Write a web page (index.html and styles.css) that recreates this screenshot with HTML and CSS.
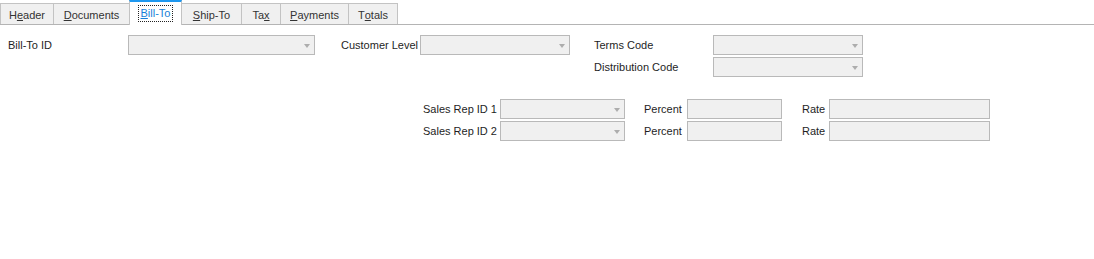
FILE: index.html
```html
<!DOCTYPE html>
<html lang="en">
<head>
    <meta charset="UTF-8">
    <title>Bill-To</title>
    <link rel="stylesheet" href="styles.css">
</head>
<body>
    <div class="tabs">
        <div class="tab w-header">H<u>e</u>ader</div>
        <div class="tab w-documents"><u>D</u>ocuments</div>
        <div class="tab active w-billto"><span class="focus"><u>B</u>ill-To</span></div>
        <div class="tab w-shipto"><u>S</u>hip-To</div>
        <div class="tab w-tax">Ta<u>x</u></div>
        <div class="tab w-payments"><u>P</u>ayments</div>
        <div class="tab w-totals">T<u>o</u>tals</div>
    </div>

    <div class="form">
        <div class="top">
            <div class="group g-billto">
                <label>Bill-To ID</label>
                <div class="select"></div>
            </div>
            <div class="group g-level">
                <label>Customer Level</label>
                <div class="select"></div>
            </div>
            <div class="group g-terms">
                <label>Terms Code</label>
                <div class="select"></div>
                <label>Distribution Code</label>
                <div class="select"></div>
            </div>
        </div>

        <div class="reps">
            <label>Sales Rep ID 1</label>
            <div class="select"></div>
            <label class="pct">Percent</label>
            <div class="input"></div>
            <label class="rate">Rate</label>
            <div class="input"></div>

            <label>Sales Rep ID 2</label>
            <div class="select"></div>
            <label class="pct">Percent</label>
            <div class="input"></div>
            <label class="rate">Rate</label>
            <div class="input"></div>
        </div>
    </div>
</body>
</html>
```

FILE: styles.css
```css
body {
    margin: 0;
    font-family: "Liberation Sans", Arial, sans-serif;
    font-size: 11px;
    color: #1e1e1e;
    background: #fff;
}
.tabs {
    display: flex;
    align-items: flex-end;
    height: 24px;
    border-bottom: 1px solid #b4b4b4;
}
.tab {
    box-sizing: border-box;
    height: 21px;
    margin-right: -1px;
    border: 1px solid #c3c3c3;
    border-bottom: none;
    background: #f0f0f0;
    color: #333;
    display: flex;
    align-items: center;
    justify-content: center;
    padding-top: 1px;
}
.tab.active {
    height: 25px;
    margin-bottom: -1px;
    border-top: 2px solid #1e98f0;
    background: #fff;
    color: #1a7fd8;
    padding-top: 0;
}
.tab .focus {
    outline: 1px dotted #222;
    outline-offset: 1px;
    padding: 0 1px;
    line-height: 13px;
}
.w-header { width: 54px; }
.w-documents { width: 77px; }
.w-billto { width: 53px; }
.w-shipto { width: 61px; }
.w-tax { width: 40px; }
.w-payments { width: 69px; }
.w-totals { width: 50px; }

.form {
    padding-top: 10px;
}
.top {
    display: flex;
    align-items: flex-start;
}
.group {
    display: grid;
    row-gap: 2px;
    align-items: center;
}
.g-billto {
    margin-left: 8px;
    grid-template-columns: 120px 187px;
}
.g-level {
    margin-left: 26px;
    grid-template-columns: 79px 150px;
}
.g-terms {
    margin-left: 24px;
    grid-template-columns: 119px 150px;
}
label {
    white-space: nowrap;
}
.select,
.input {
    box-sizing: border-box;
    height: 20px;
    border: 1px solid #b9b9b9;
    background: #f0f0f0;
}
.select {
    display: flex;
    align-items: center;
    justify-content: flex-end;
    padding-right: 4px;
}
.select::after {
    content: "";
    border-left: 3.5px solid transparent;
    border-right: 3.5px solid transparent;
    border-top: 4px solid #adadad;
    margin-top: 1px;
}
.reps {
    display: grid;
    grid-template-columns: 77px 125px 62px 95px 47px 161px;
    row-gap: 2px;
    align-items: center;
    margin: 22px 0 0 423px;
    width: max-content;
}
.reps .pct,
.reps .rate {
    padding-left: 19px;
}
.reps .rate {
    padding-left: 20px;
}
```
